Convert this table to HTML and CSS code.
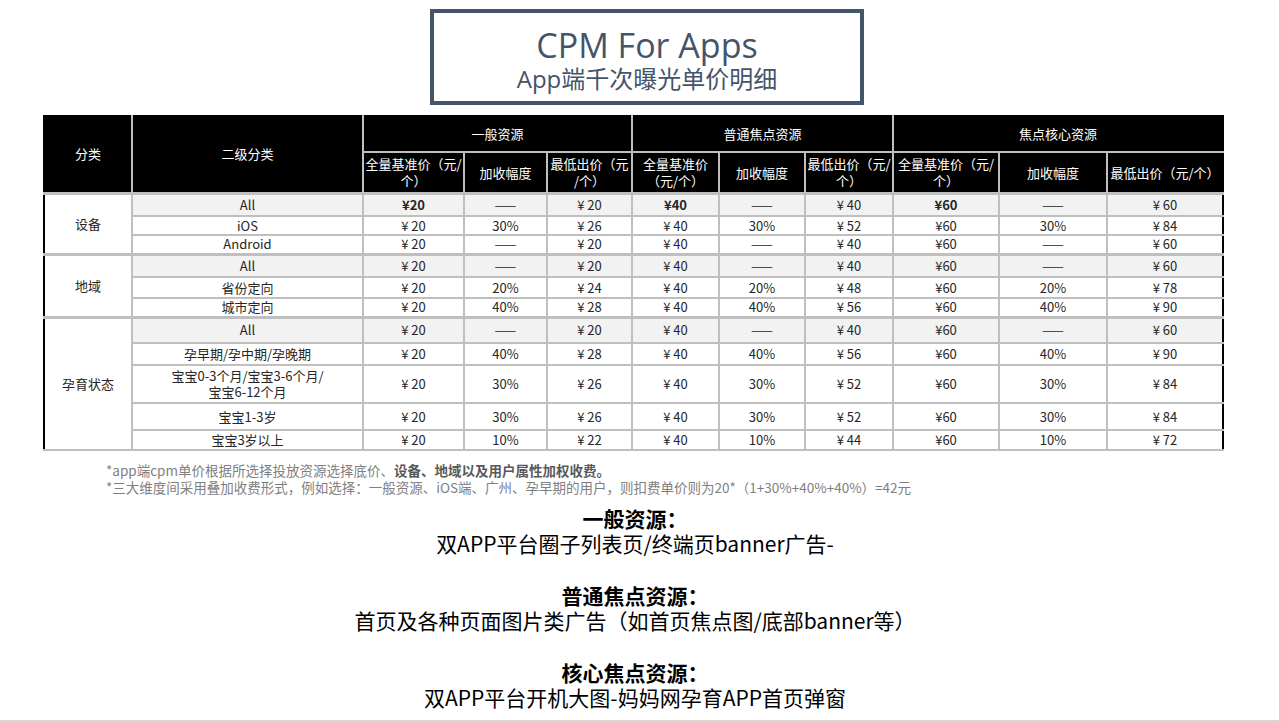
FILE: index.html
```html
<!DOCTYPE html>
<html lang="zh-CN">
<head>
<meta charset="utf-8">
<title>CPM For Apps</title>
<link rel="stylesheet" href="styles.css">
</head>
<body>
<div class="page">
  <header class="title-box">
    <div class="title-main">CPM For Apps</div>
    <div class="title-sub">App端千次曝光单价明细</div>
  </header>

  <table class="price">
    <colgroup>
      <col class="c1"><col class="c2"><col class="c3"><col class="c4"><col class="c5"><col class="c6"><col class="c7"><col class="c8"><col class="c9"><col class="c10"><col class="c11">
    </colgroup>
    <thead>
      <tr class="h37">
        <th rowspan="2">分类</th>
        <th rowspan="2">二级分类</th>
        <th colspan="3">一般资源</th>
        <th colspan="3">普通焦点资源</th>
        <th colspan="3">焦点核心资源</th>
      </tr>
      <tr class="h41">
        <th>全量基准价（元/<br>个）</th>
        <th>加收幅度</th>
        <th>最低出价（元<br>/个）</th>
        <th>全量基准价<br>（元/个）</th>
        <th>加收幅度</th>
        <th>最低出价（元/<br>个）</th>
        <th>全量基准价（元/<br>个）</th>
        <th>加收幅度</th>
        <th>最低出价（元/个）</th>
      </tr>
    </thead>
    <tbody>
      <tr class="h23 grey group">
        <td rowspan="3" class="cat">设备</td>
        <td>All</td><td class="b">¥20</td><td>——</td><td>¥ 20</td><td class="b">¥40</td><td>——</td><td>¥ 40</td><td class="b">¥60</td><td>——</td><td>¥ 60</td>
      </tr>
      <tr class="h19">
        <td>iOS</td><td>¥ 20</td><td>30%</td><td>¥ 26</td><td>¥ 40</td><td>30%</td><td>¥ 52</td><td>¥60</td><td>30%</td><td>¥ 84</td>
      </tr>
      <tr class="h19">
        <td>Android</td><td>¥ 20</td><td>——</td><td>¥ 20</td><td>¥ 40</td><td>——</td><td>¥ 40</td><td>¥60</td><td>——</td><td>¥ 60</td>
      </tr>
      <tr class="h23 grey group">
        <td rowspan="3" class="cat">地域</td>
        <td>All</td><td>¥ 20</td><td>——</td><td>¥ 20</td><td>¥ 40</td><td>——</td><td>¥ 40</td><td>¥60</td><td>——</td><td>¥ 60</td>
      </tr>
      <tr class="h21">
        <td>省份定向</td><td>¥ 20</td><td>20%</td><td>¥ 24</td><td>¥ 40</td><td>20%</td><td>¥ 48</td><td>¥60</td><td>20%</td><td>¥ 78</td>
      </tr>
      <tr class="h19">
        <td>城市定向</td><td>¥ 20</td><td>40%</td><td>¥ 28</td><td>¥ 40</td><td>40%</td><td>¥ 56</td><td>¥60</td><td>40%</td><td>¥ 90</td>
      </tr>
      <tr class="h26 grey group">
        <td rowspan="5" class="cat">孕育状态</td>
        <td>All</td><td>¥ 20</td><td>——</td><td>¥ 20</td><td>¥ 40</td><td>——</td><td>¥ 40</td><td>¥60</td><td>——</td><td>¥ 60</td>
      </tr>
      <tr class="h22">
        <td>孕早期/孕中期/孕晚期</td><td>¥ 20</td><td>40%</td><td>¥ 28</td><td>¥ 40</td><td>40%</td><td>¥ 56</td><td>¥60</td><td>40%</td><td>¥ 90</td>
      </tr>
      <tr class="h38">
        <td>宝宝0-3个月/宝宝3-6个月/<br>宝宝6-12个月</td><td>¥ 20</td><td>30%</td><td>¥ 26</td><td>¥ 40</td><td>30%</td><td>¥ 52</td><td>¥60</td><td>30%</td><td>¥ 84</td>
      </tr>
      <tr class="h27">
        <td>宝宝1-3岁</td><td>¥ 20</td><td>30%</td><td>¥ 26</td><td>¥ 40</td><td>30%</td><td>¥ 52</td><td>¥60</td><td>30%</td><td>¥ 84</td>
      </tr>
      <tr class="h20">
        <td>宝宝3岁以上</td><td>¥ 20</td><td>10%</td><td>¥ 22</td><td>¥ 40</td><td>10%</td><td>¥ 44</td><td>¥60</td><td>10%</td><td>¥ 72</td>
      </tr>
    </tbody>
  </table>

  <div class="notes">
    <p>*app端cpm单价根据所选择投放资源选择底价、<strong>设备、地域以及用户属性加权收费。</strong></p>
    <p>*三大维度间采用叠加收费形式，例如选择：一般资源、iOS端、广州、孕早期的用户，则扣费单价则为20*（1+30%+40%+40%）=42元</p>
  </div>

  <section class="res">
    <div class="res-block">
      <h2>一般资源：</h2>
      <p>双APP平台圈子列表页/终端页banner广告-</p>
    </div>
    <div class="res-block">
      <h2>普通焦点资源：</h2>
      <p>首页及各种页面图片类广告（如首页焦点图/底部banner等）</p>
    </div>
    <div class="res-block">
      <h2>核心焦点资源：</h2>
      <p>双APP平台开机大图-妈妈网孕育APP首页弹窗</p>
    </div>
  </section>

  <div class="bottom-bar"></div>
</div>
</body>
</html>
```

FILE: styles.css
```css
* { box-sizing: border-box; }
html, body { margin: 0; padding: 0; background: #fff; }
body {
  font-family: "Noto Sans CJK SC", "Noto Sans", sans-serif;
  color: #000;
  width: 1279px;
  height: 721px;
  overflow: hidden;
}
.page { padding-top: 9px; }

.title-box {
  margin-left: 430px;
  width: 434px;
  height: 96px;
  border: 4px solid #44546a;
  color: #44546a;
  text-align: center;
  padding-top: 13px;
}
.title-main {
  font-family: "Open Sans", "Noto Sans CJK SC", sans-serif;
  font-size: 34px;
  line-height: 38px;
  height: 38px;
}
.title-sub {
  font-family: "Open Sans", "Noto Sans CJK SC", sans-serif;
  font-size: 24px;
  line-height: 30px;
  height: 30px;
}

.price {
  margin: 10px 0 0 43px;
  width: 1179px;
  table-layout: fixed;
  border-collapse: collapse;
  font-size: 13px;
  line-height: 17px;
  color: #262626;
  text-align: center;
  border-left: 2px solid #000;
  border-right: 2px solid #000;
  border-bottom: 2px solid #000;
}
.c1 { width: 88px; } .c2 { width: 231px; } .c3 { width: 101px; } .c4 { width: 83px; }
.c5 { width: 85px; } .c6 { width: 87px; } .c7 { width: 86px; } .c8 { width: 88px; }
.c9 { width: 106px; } .c10 { width: 108px; } .c11 { width: 116px; }

.price th {
  background: #000;
  color: #fff;
  font-weight: normal;
  padding: 0;
  border: 2px solid #bfbfbf;
  border-top: 0;
  vertical-align: middle;
  white-space: nowrap;
}
.price thead tr:first-child th:first-child { border-left: 0; }
.price thead tr:first-child th:last-child { border-right: 0; }
.price thead tr:last-child th:last-child { border-right: 0; }
.price td {
  padding: 0;
  border: 2px solid #bfbfbf;
  vertical-align: middle;
  white-space: nowrap;
  line-height: 16px;
}
.price td.cat { border-left: 0; }
.price tr td:last-child { border-right: 0; }
.price tr.group td { border-top: 3px solid #bfbfbf; }
.price tr.grey td { background: #f2f2f2; }
.price tr.grey td.cat { background: #fff; }
.price td.b { font-weight: bold; }

.h37 { height: 37px; }
.h41 { height: 41px; }
.h19 { height: 19px; }
.h20 { height: 20px; }
.h21 { height: 21px; }
.h22 { height: 22px; }
.h23 { height: 23px; }
.h26 { height: 26px; }
.h27 { height: 27px; }
.h38 { height: 38px; }

.notes {
  margin: 11px 0 0 106px;
  font-size: 13.5px;
  line-height: 17px;
  color: #7f7f7f;
}
.notes p { margin: 0; }
.notes strong { color: #595959; font-weight: bold; }

.res {
  margin-top: 10px;
  text-align: center;
  padding-right: 9px;
}
.res-block + .res-block { margin-top: 27px; }
.res h2 {
  margin: 0;
  font-size: 21px;
  line-height: 25px;
  font-weight: bold;
}
.res p {
  margin: 0;
  font-size: 21px;
  line-height: 25px;
}

.bottom-bar {
  margin-top: 10px;
  height: 4px;
  background: #d9d9d9;
}
```
